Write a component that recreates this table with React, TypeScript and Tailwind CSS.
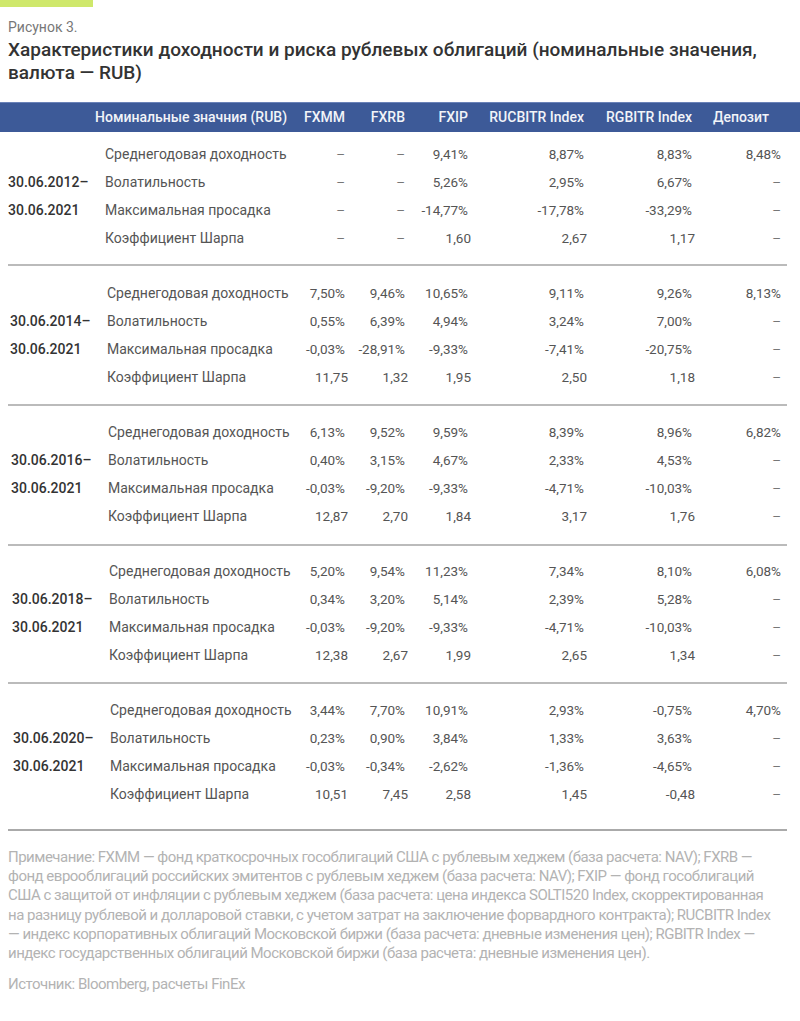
import React from 'react';

type Section = {
  from: string;
  to: string;
  shift: string;
  pad: string;
  rows: string[][];
};

const labels = [
  'Среднегодовая доходность',
  'Волатильность',
  'Максимальная просадка',
  'Коэффициент Шарпа',
];

const sections: Section[] = [
  {
    from: '30.06.2012–',
    to: '30.06.2021',
    shift: 'pl-0',
    pad: 'pt-[8px] pb-[12px]',
    rows: [
      ['–', '–', '9,41%', '8,87%', '8,83%', '8,48%'],
      ['–', '–', '5,26%', '2,95%', '6,67%', '–'],
      ['–', '–', '-14,77%', '-17,78%', '-33,29%', '–'],
      ['–', '–', '1,60', '2,67', '1,17', '–'],
    ],
  },
  {
    from: '30.06.2014–',
    to: '30.06.2021',
    shift: 'pl-[2px]',
    pad: 'pt-[13px] pb-[13px]',
    rows: [
      ['7,50%', '9,46%', '10,65%', '9,11%', '9,26%', '8,13%'],
      ['0,55%', '6,39%', '4,94%', '3,24%', '7,00%', '–'],
      ['-0,03%', '-28,91%', '-9,33%', '-7,41%', '-20,75%', '–'],
      ['11,75', '1,32', '1,95', '2,50', '1,18', '–'],
    ],
  },
  {
    from: '30.06.2016–',
    to: '30.06.2021',
    shift: 'pl-[3px]',
    pad: 'pt-[12px] pb-[14px]',
    rows: [
      ['6,13%', '9,52%', '9,59%', '8,39%', '8,96%', '6,82%'],
      ['0,40%', '3,15%', '4,67%', '2,33%', '4,53%', '–'],
      ['-0,03%', '-9,20%', '-9,33%', '-4,71%', '-10,03%', '–'],
      ['12,87', '2,70', '1,84', '3,17', '1,76', '–'],
    ],
  },
  {
    from: '30.06.2018–',
    to: '30.06.2021',
    shift: 'pl-[4px]',
    pad: 'pt-[11px] pb-[13px]',
    rows: [
      ['5,20%', '9,54%', '11,23%', '7,34%', '8,10%', '6,08%'],
      ['0,34%', '3,20%', '5,14%', '2,39%', '5,28%', '–'],
      ['-0,03%', '-9,20%', '-9,33%', '-4,71%', '-10,03%', '–'],
      ['12,38', '2,67', '1,99', '2,65', '1,34', '–'],
    ],
  },
  {
    from: '30.06.2020–',
    to: '30.06.2021',
    shift: 'pl-[5px]',
    pad: 'pt-[12px] pb-[21px]',
    rows: [
      ['3,44%', '7,70%', '10,91%', '2,93%', '-0,75%', '4,70%'],
      ['0,23%', '0,90%', '3,84%', '1,33%', '3,63%', '–'],
      ['-0,03%', '-0,34%', '-2,62%', '-1,36%', '-4,65%', '–'],
      ['10,51', '7,45', '2,58', '1,45', '-0,48', '–'],
    ],
  },
];

const grid = 'grid grid-cols-[97px_195px_45px_60px_63px_116px_108px_89px]';

const Value = ({ v }: { v: string }) => {
  if (v === '–') return <span className="text-[#777]">–</span>;
  if (v.endsWith('%')) return <span>{v}</span>;
  return <span className="-mr-[3px]">{v}</span>;
};

const App = () => {
  return (
    <div className="w-[800px] min-h-[1021px] bg-white font-['Roboto',sans-serif] text-[#444]">
      <div className="h-[7px] w-[93px] bg-[#cfe86b]" />

      <div className="px-2 pt-[11px]">
        <div className="text-[14px] leading-[18px] text-[#777]">Рисунок 3.</div>
        <h1 className="mt-[2px] text-[19px] leading-[23px] font-medium text-[#333]">
          Характеристики доходности и риска рублевых облигаций (номинальные значения,
          <br />
          валюта — RUB)
        </h1>
      </div>

      <div className="mt-[18px] bg-[#3d5a98] h-[30px] pl-2 border-t border-[#6a82b8]">
        <div className={`${grid} h-full items-center text-[14px] font-medium text-[#f2f4f8]`}>
          <div className="col-span-2 pl-[87px]">Номинальные значния (RUB)</div>
          <div className="text-right">FXMM</div>
          <div className="text-right">FXRB</div>
          <div className="text-right">FXIP</div>
          <div className="text-right">RUCBITR Index</div>
          <div className="text-right">RGBITR Index</div>
          <div className="text-right pr-[12px]">Депозит</div>
        </div>
      </div>

      <div className="px-2">
        {sections.map((s, si) => (
          <div
            key={si}
            className={`${s.pad} border-b-2 ${si === sections.length - 1 ? 'border-[#aaa]' : 'border-[#bbb]'} mr-[5px]`}
          >
            <div className={`${grid} auto-rows-[28px] items-center text-[14px]`}>
              {s.rows.map((r, ri) => (
                <React.Fragment key={ri}>
                  <div className={`${s.shift} font-medium text-[#333]`}>
                    {ri === 1 ? s.from : ri === 2 ? s.to : ''}
                  </div>
                  <div className={`${s.shift} text-[#555]`}>{labels[ri]}</div>
                  {r.map((v, vi) => (
                    <div key={vi} className="text-right text-[#555] text-[13.5px]">
                      <Value v={v} />
                    </div>
                  ))}
                </React.Fragment>
              ))}
            </div>
          </div>
        ))}
      </div>

      <div className="px-2 pt-[17px] text-[15px] leading-[19.2px] text-[#b3b3b3] tracking-[-0.5px]">
        <p>
          Примечание: FXMM — фонд краткосрочных гособлигаций США с рублевым хеджем (база расчета: NAV); FXRB —
          <br />
          фонд еврооблигаций российских эмитентов с рублевым хеджем (база расчета: NAV); FXIP — фонд гособлигаций
          <br />
          США с защитой от инфляции с рублевым хеджем (база расчета: цена индекса SOLTI520 Index, скорректированная
          <br />
          на разницу рублевой и долларовой ставки, с учетом затрат на заключение форвардного контракта); RUCBITR Index
          <br />
          — индекс корпоративных облигаций Московской биржи (база расчета: дневные изменения цен); RGBITR Index —
          <br />
          индекс государственных облигаций Московской биржи (база расчета: дневные изменения цен).
        </p>
        <p className="mt-[12px]">Источник: Bloomberg, расчеты FinEx</p>
      </div>
    </div>
  );
};

export default App;
